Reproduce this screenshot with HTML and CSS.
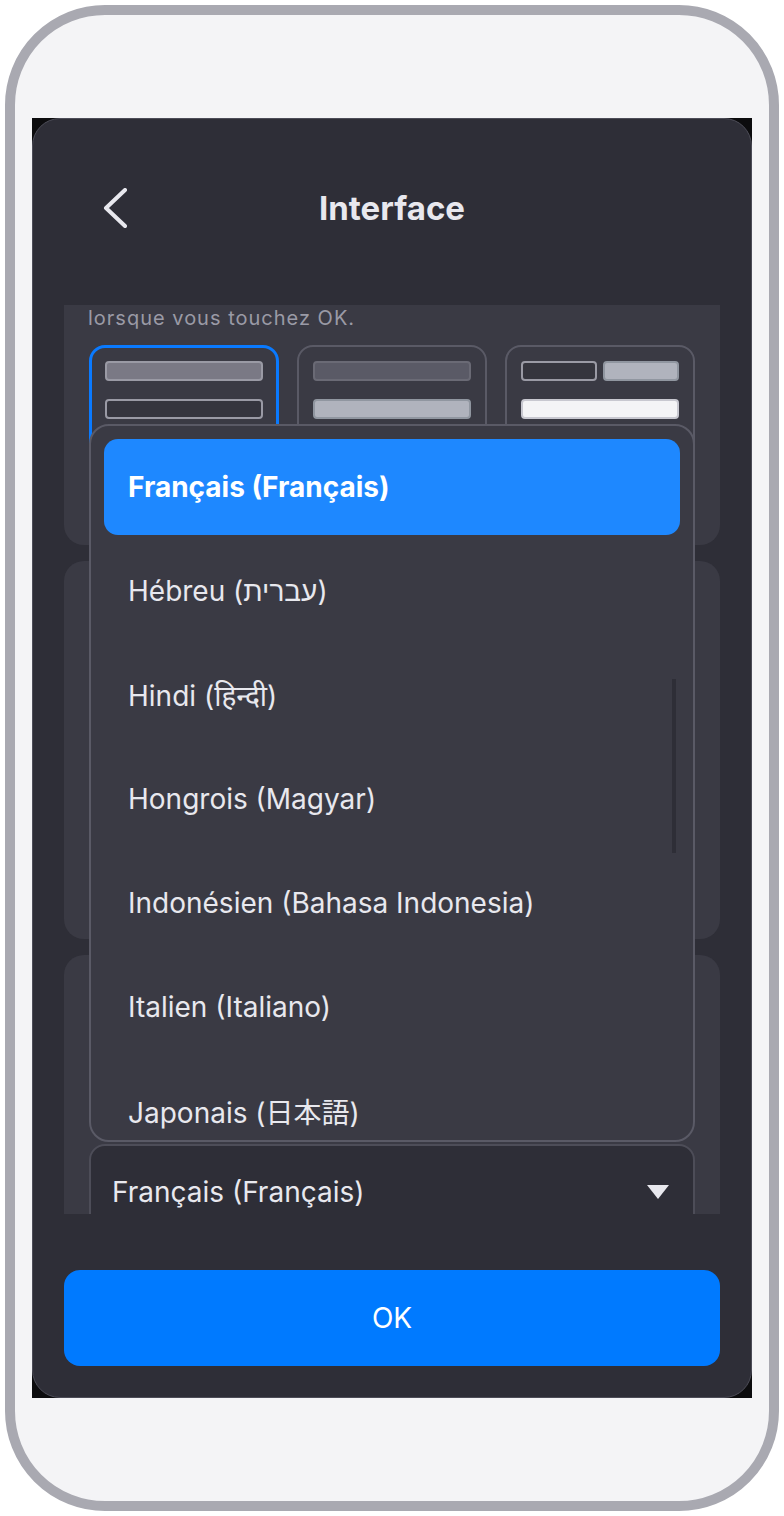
FILE: index.html
```html
<!DOCTYPE html>
<html lang="fr">
<head>
    <meta charset="UTF-8">
    <meta name="viewport" content="width=device-width, initial-scale=1.0">
    <title>Interface</title>
    <link rel="stylesheet" href="styles.css">
</head>
<body>
    <div class="phone">
        <div class="screen">
            <div class="panel">
                <div class="header">
                    <button class="back" aria-label="Retour">
                        <svg width="26" height="40" viewBox="0 0 26 40">
                            <path d="M23 2 L4 20 L23 38" fill="none" stroke="#e8e8ee" stroke-width="4" stroke-linecap="round" stroke-linejoin="round"/>
                        </svg>
                    </button>
                    <h1 class="title">Interface</h1>
                    <span></span>
                </div>

                <div class="scroll">
                    <div class="card card-first">
                        <p class="hint">lorsque vous touchez OK.</p>
                        <div class="themes">
                            <div class="theme selected">
                                <div class="bar bar-grey"></div>
                                <div class="bar bar-outline"></div>
                            </div>
                            <div class="theme">
                                <div class="bar bar-dim"></div>
                                <div class="bar bar-light"></div>
                            </div>
                            <div class="theme">
                                <div class="bar-row">
                                    <div class="bar bar-outline"></div>
                                    <div class="bar bar-light"></div>
                                </div>
                                <div class="bar bar-white"></div>
                            </div>
                        </div>
                    </div>

                    <div class="card card-mid"></div>

                    <div class="card card-lang">
                        <div class="card-head"></div>
                        <div class="select">
                            <span>Français (Français)</span>
                            <svg width="22" height="14" viewBox="0 0 22 14">
                                <path d="M0 0 H22 L11 14 Z" fill="#e8e8ee"/>
                            </svg>
                        </div>
                    </div>

                    <div class="dropdown">
                        <div class="option active">Français (Français)</div>
                        <div class="option">Hébreu (<span dir="rtl">עברית</span>)</div>
                        <div class="option">Hindi (हिन्दी)</div>
                        <div class="option">Hongrois (Magyar)</div>
                        <div class="option">Indonésien (Bahasa Indonesia)</div>
                        <div class="option">Italien (Italiano)</div>
                        <div class="option">Japonais (日本語)</div>
                        <div class="scrollbar"></div>
                    </div>
                </div>

                <button class="ok">OK</button>
            </div>
        </div>
    </div>
</body>
</html>
```

FILE: styles.css
```css
body {
    margin: 0;
    background: #ffffff;
    font-family: Inter, "Noto Sans", "Noto Sans CJK JP", sans-serif;
}
.phone {
    margin: 5px;
    width: 737px;
    height: 1383px;
    border: 10px solid #a9a9b1;
    border-radius: 100px;
    background: #f4f4f6;
    padding: 103px 0 0 17px;
}
.screen {
    width: 720px;
    height: 1280px;
    background: #0c0c0e;
}
.panel {
    height: 100%;
    box-sizing: border-box;
    border: 1px solid #4d4d58;
    border-radius: 28px;
    background: #2e2e37;
    padding: 0 31px 31px;
    display: flex;
    flex-direction: column;
}
.header {
    height: 178px;
    margin-bottom: 8px;
    display: grid;
    grid-template-columns: 1fr auto 1fr;
    align-items: center;
}
.back {
    justify-self: start;
    margin-left: 38px;
    padding: 0;
    border: none;
    background: none;
    display: flex;
}
.title {
    margin: 0;
    font-size: 33px;
    font-weight: 700;
    color: #e8e8ee;
}
.scroll {
    position: relative;
    height: 910px;
    overflow: hidden;
}
.card {
    background: #3a3a44;
    border-radius: 20px;
    margin-bottom: 16px;
    padding: 0 25px;
}
.card-first {
    border-radius: 0 0 20px 20px;
    height: 240px;
    box-sizing: border-box;
    padding-left: 24px;
}
.hint {
    margin: 0;
    font-size: 20px;
    line-height: 26px;
    letter-spacing: 1px;
    color: #9a9aa6;
}
.themes {
    margin-top: 14px;
    padding-left: 1px;
    display: flex;
    gap: 18px;
}
.theme {
    flex: 1;
    height: 176px;
    box-sizing: border-box;
    border: 2px solid #5a5a66;
    border-radius: 16px;
    padding: 14px;
    display: flex;
    flex-direction: column;
    gap: 18px;
}
.theme.selected {
    border: 3px solid #0a7aff;
    padding: 13px;
}
.bar {
    height: 20px;
    box-sizing: border-box;
    border-radius: 4px;
    border: 2px solid #9a9aa5;
}
.bar-row {
    display: flex;
    gap: 6px;
}
.bar-row .bar {
    flex: 1;
}
.bar-grey {
    background: #7a7985;
}
.bar-outline {
    background: #35353e;
}
.bar-dim {
    background: #5a5a66;
    border-color: #6a6a75;
}
.bar-light {
    background: #b0b3bd;
    border-color: #9096a0;
}
.bar-white {
    background: #f4f4f6;
    border-color: #c8c8d0;
}
.card-mid {
    height: 378px;
}
.card-lang {
    height: 400px;
}
.card-head {
    height: 189px;
}
.select {
    height: 96px;
    box-sizing: border-box;
    border: 2px solid #4d4d58;
    border-radius: 16px;
    background: #2e2e37;
    padding: 0 24px 0 21px;
    display: flex;
    align-items: center;
    justify-content: space-between;
    font-size: 28px;
    color: #e8e8ee;
}
.dropdown {
    position: absolute;
    left: 25px;
    top: 119px;
    width: 606px;
    height: 718px;
    box-sizing: border-box;
    border: 2px solid #5a5a66;
    border-radius: 20px;
    background: #3a3a44;
    padding: 13px;
    overflow: hidden;
    display: flex;
    flex-direction: column;
    gap: 8px;
}
.option {
    flex: none;
    height: 96px;
    border-radius: 14px;
    padding-left: 24px;
    display: flex;
    align-items: center;
    font-size: 28px;
    color: #e8e8ee;
}
.option.active {
    background: #1e88ff;
    color: #ffffff;
    font-weight: 700;
}
.scrollbar {
    position: absolute;
    left: 581px;
    top: 253px;
    width: 4px;
    height: 174px;
    background: #2e2e37;
}
.ok {
    margin-top: 56px;
    height: 96px;
    border: none;
    border-radius: 16px;
    background: #007aff;
    color: #ffffff;
    font-family: Inter, "Noto Sans", sans-serif;
    font-size: 28px;
}
```
